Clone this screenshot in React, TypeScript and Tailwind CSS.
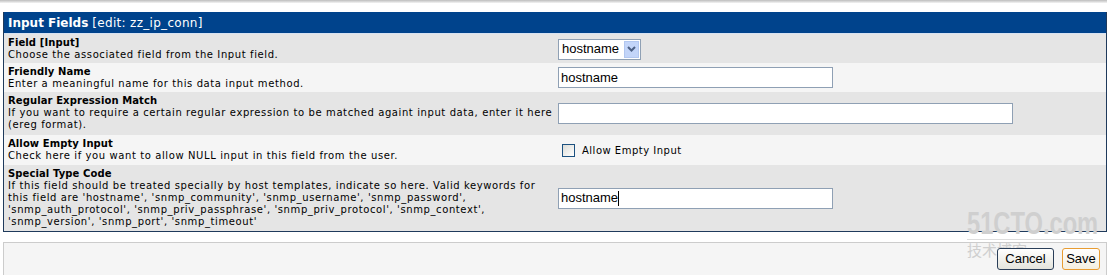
import React from "react";

const verdana = { fontFamily: '"DejaVu Sans", Verdana, sans-serif' };
const arial = { fontFamily: '"Liberation Sans", Arial, sans-serif' };

function Row({
  bg,
  title,
  desc,
  children,
  minH,
}: {
  bg: string;
  title: string;
  desc: React.ReactNode;
  children: React.ReactNode;
  minH: string;
}) {
  return (
    <div className={`flex ${bg} ${minH}`}>
      <div className="w-[551px] shrink-0 pl-[4px] pt-[3px] pb-[3px] text-[10px] leading-[12px] text-black">
        <div className="font-bold tracking-[0.1px]">{title}</div>
        <div className="tracking-[0.6px]">{desc}</div>
      </div>
      <div className="flex flex-1 items-center pl-[3px]">{children}</div>
    </div>
  );
}

function TextBox({ w, value, caret }: { w: string; value?: string; caret?: boolean }) {
  return (
    <div
      className={`${w} h-[21px] border border-[#8fa0b4] bg-white flex items-center px-[2px] text-[13px] text-black`}
      style={arial}
    >
      {value}
      {caret && <span className="inline-block w-px h-[15px] bg-black" />}
    </div>
  );
}

export default function App() {
  return (
    <div className="relative w-[1107px] h-[275px] overflow-hidden bg-white" style={verdana}>
      <div className="h-[3px] bg-gradient-to-b from-[#bdbdbd] to-[#f4f4f4]" />
      <div className="h-[9px]" />
      <div className="ml-[3px] border-l border-r border-b border-[#1f3a5c]">
        <div className="h-[21px] bg-[#00438c] flex items-center pl-[4px] text-[12px] text-white">
          <span className="font-bold">Input Fields</span>
          <span className="ml-[4px] tracking-[0.3px]">[edit: zz_ip_conn]</span>
        </div>
        <div className="h-px bg-[#d6e2f2]" />
        <Row
          bg="bg-[#e5e5e5]"
          minH="h-[29px]"
          title="Field [Input]"
          desc="Choose the associated field from the Input field."
        >
          <div
            className="h-[21px] w-[83px] border border-[#8fa0b4] bg-white flex items-center pl-[3px] pr-[1px] text-[13px] text-black mt-[1px]"
            style={arial}
          >
            <span className="flex-1">hostname</span>
            <span className="w-[15px] h-[17px] bg-[#c3d5f9] border border-[#b2c7f0] flex items-center justify-center">
              <svg width="9" height="6" viewBox="0 0 9 6">
                <path d="M1 1 L4.5 4.5 L8 1" fill="none" stroke="#4d6185" strokeWidth="2" />
              </svg>
            </span>
          </div>
        </Row>
        <Row
          bg="bg-[#f5f5f5]"
          minH="h-[29px]"
          title="Friendly Name"
          desc="Enter a meaningful name for this data input method."
        >
          <TextBox w="w-[275px]" value="hostname" />
        </Row>
        <Row
          bg="bg-[#e5e5e5]"
          minH="h-[43px]"
          title="Regular Expression Match"
          desc="If you want to require a certain regular expression to be matched againt input data, enter it here (ereg format)."
        >
          <TextBox w="w-[455px]" />
        </Row>
        <Row
          bg="bg-[#f5f5f5]"
          minH="h-[30px]"
          title="Allow Empty Input"
          desc="Check here if you want to allow NULL input in this field from the user."
        >
          <div className="flex items-center pl-[4px] text-[10px] text-black">
            <span className="w-[13px] h-[13px] border border-[#1c5180] bg-gradient-to-br from-[#dcdcd7] to-white" />
            <span className="ml-[7px] tracking-[0.5px]">Allow Empty Input</span>
          </div>
        </Row>
        <Row
          bg="bg-[#e5e5e5]"
          minH="h-[66px]"
          title="Special Type Code"
          desc="If this field should be treated specially by host templates, indicate so here. Valid keywords for this field are 'hostname', 'snmp_community', 'snmp_username', 'snmp_password', 'snmp_auth_protocol', 'snmp_priv_passphrase', 'snmp_priv_protocol', 'snmp_context', 'snmp_version', 'snmp_port', 'snmp_timeout'"
        >
          <TextBox w="w-[275px]" value="hostname" caret />
        </Row>
      </div>
      <div className="h-[10px]" />
      <div className="relative z-10 ml-[3px] h-[40px] border border-[#cccccc] flex justify-end items-start pt-[5px] pr-[6px] gap-[8px]">
        <button
          className="h-[22px] w-[57px] rounded-[3px] border border-[#2a3e58] bg-gradient-to-b from-white to-[#e4e4dc] text-[13px] text-black"
          style={arial}
        >
          Cancel
        </button>
        <button
          className="h-[22px] w-[38px] rounded-[3px] border border-[#e89c32] bg-gradient-to-b from-white to-[#f4efe0] text-[13px] text-black"
          style={arial}
        >
          Save
        </button>
      </div>
      <div className="absolute left-[3px] right-0 top-[243px] h-[40px] bg-[#f5f5f5]" />
      <div className="absolute left-[967px] top-[207px] pointer-events-none select-none text-[#cfcfcf] z-0">
        <div
          className="text-[32px] font-bold leading-[32px] origin-left scale-x-[0.74] whitespace-nowrap"
          style={arial}
        >
          51CTO.com
        </div>
        <div className="h-px w-[126px] bg-[#dddddd]" />
        <div className="text-[15px] leading-[20px] whitespace-nowrap" style={{ fontFamily: '"Noto Sans CJK SC", sans-serif' }}>
          技术博客
        </div>
      </div>
    </div>
  );
}
